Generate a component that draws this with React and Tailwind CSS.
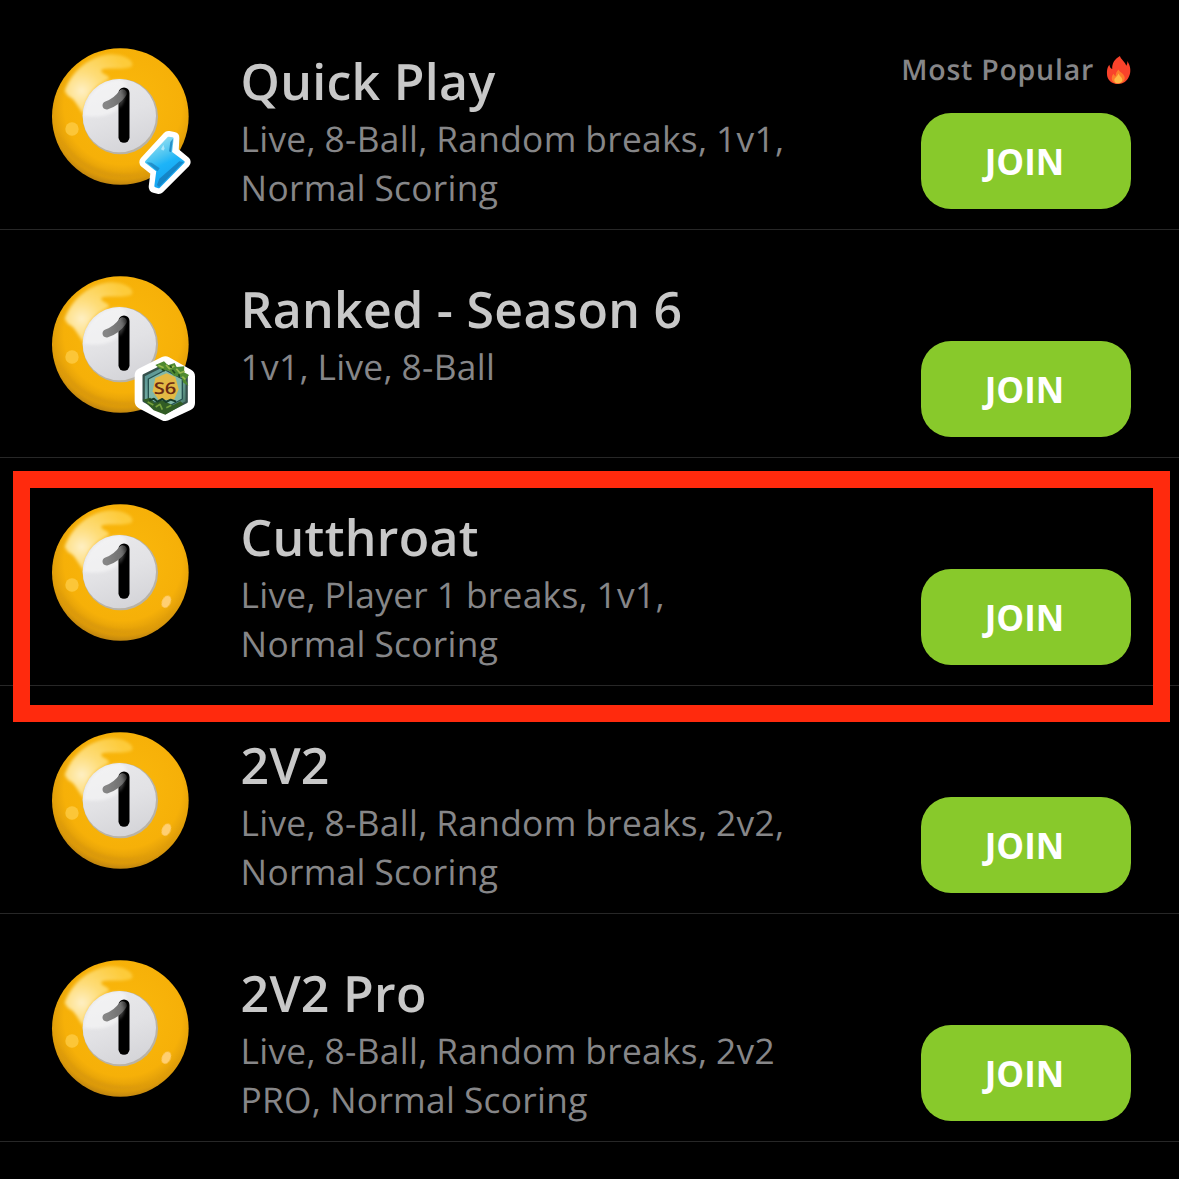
function BallDefs() {
  return (
    <svg className="absolute size-0" aria-hidden="true">
      <defs>
        <radialGradient id="shell" cx="0.52" cy="0.42" r="0.6">
          <stop offset="0" stopColor="#fbb90c" />
          <stop offset="0.72" stopColor="#f6b008" />
          <stop offset="0.9" stopColor="#dc9a0a" />
          <stop offset="1" stopColor="#b47c10" />
        </radialGradient>
        <linearGradient id="disc" x1="0.3" y1="0" x2="0.65" y2="1">
          <stop offset="0" stopColor="#e9e9eb" />
          <stop offset="0.5" stopColor="#e2e2e5" />
          <stop offset="1" stopColor="#d4d4d8" />
        </linearGradient>
        <linearGradient id="flag" gradientUnits="userSpaceOnUse" x1="200" y1="205" x2="268" y2="200">
          <stop offset="0" stopColor="#858585" />
          <stop offset="0.65" stopColor="#707070" />
          <stop offset="1" stopColor="#101010" />
        </linearGradient>
        <radialGradient id="glare" gradientUnits="userSpaceOnUse" cx="125" cy="165" r="150">
          <stop offset="0" stopColor="#fff3cf" stopOpacity="0.95" />
          <stop offset="0.4" stopColor="#ffe48c" stopOpacity="0.85" />
          <stop offset="1" stopColor="#ffd550" stopOpacity="0.7" />
        </radialGradient>
        <linearGradient id="bolt" gradientUnits="userSpaceOnUse" x1="345" y1="320" x2="395" y2="425">
          <stop offset="0" stopColor="#8adcf2" />
          <stop offset="0.4" stopColor="#45c2f2" />
          <stop offset="0.6" stopColor="#1db4f8" />
          <stop offset="1" stopColor="#16a6f2" />
        </linearGradient>
        <linearGradient id="hex" x1="0" y1="0" x2="1" y2="1">
          <stop offset="0" stopColor="#4f8a8c" />
          <stop offset="0.5" stopColor="#78b2a6" />
          <stop offset="1" stopColor="#3c6c5c" />
        </linearGradient>
        <filter id="soft" filterUnits="userSpaceOnUse" x="0" y="0" width="510" height="510">
          <feGaussianBlur stdDeviation="4" />
        </filter>
        <filter id="faint" filterUnits="userSpaceOnUse" x="0" y="0" width="510" height="510">
          <feGaussianBlur stdDeviation="1.6" />
        </filter>
      </defs>
    </svg>
  );
}

function BoltBadge() {
  return (
    <g strokeLinejoin="round">
      <path d="M385 303 L316 378 L350 405 L344 453 L356 456 L434 378 L398 348 L400 306 Z" fill="#fff" stroke="#fff" strokeWidth="36" />
      <path d="M386 306 L319 378 L353 404 L347 450 L356 453 L430 378 L392 350 L397 308 Z" fill="url(#bolt)" stroke="url(#bolt)" strokeWidth="8" />
      <path d="M399 308 L393 349 L387 346 L391 318 Z M431 378 L357 453 L351 447 L358 428 L418 376 Z" fill="#1479b8" opacity="0.75" />
      <path d="M319 379 L335 380 L359 397 L353 406 Z" fill="#1a82be" opacity="0.75" />
      <path d="M363 340 l7 -14 l4 12 l-4 6 Z" fill="#d8f8ff" opacity="0.6" />
    </g>
  );
}

function SeasonBadge() {
  return (
    <g strokeLinejoin="round">
      <path d="M376 300 L442 337 L442 417 L376 448 L307 412 L307 334 Z" fill="#fff" stroke="#fff" strokeWidth="46" />
      <path d="M376 302 L440 336 L440 414 L376 447 L311 411 L311 334 Z" fill="url(#hex)" stroke="#35514c" strokeWidth="7" />
      <path d="M376 318 L427 345 L427 405 L376 432 L325 405 L325 345 Z" fill="#81b8a8" stroke="#24504f" strokeWidth="4" />
      <path d="M346 342 L380 328 L406 339 L416 376 L402 407 L356 408 L338 382 Z" fill="#e3b944" />
      <path d="M346 303 L372 292 L384 304 L404 297 L410 309 L433 307 L432 325 L447 333 L437 347 L445 365 L430 356 L424 338 L402 336 L388 320 L364 318 Z" fill="#4f8a31" />
      <path d="M355 304 l16 7 M378 302 l10 12 l15 -8 M409 314 l11 13 l14 -5 M427 338 l9 8" stroke="#98b94e" strokeWidth="5" fill="none" />
      <path d="M366 316 l8 5 M397 318 l8 10 M416 331 l3 9 M391 305 l3 7" stroke="#1e4a1b" strokeWidth="5" fill="none" />
      <path d="M308 407 L331 401 L343 417 L366 409 L399 424 L421 412 L431 420 L376 452 L341 439 Z" fill="#315c24" />
      <path d="M323 414 l17 9 M347 429 l13 -8 l7 16 M379 431 l15 -7" stroke="#75a13c" strokeWidth="5" fill="none" />
      <path d="M328 409 l14 -5 l10 9 l15 -8 l11 9 l14 -7 l16 6" stroke="#173d2a" strokeWidth="6" fill="none" />
      <text x="375" y="391" textAnchor="middle" fontSize="49" fontWeight="600" fill="#6b2a12" className="font-['Open_Sans',sans-serif]" textLength="68" lengthAdjust="spacingAndGlyphs">S6</text>
    </g>
  );
}

function Ball({ badge }) {
  return (
    <svg viewBox="0 0 510 510" className="mt-[34px] ml-[40px] size-[170px] shrink-0">
      <circle cx="241" cy="241.500" r="205" fill="url(#shell)" />
      <path d="M74 165 C95 105 150 58 215 55 C256 56 284 76 276 90 C262 104 200 92 185 101 C178 113 205 113 208 128 C180 145 137 165 131 235 C113 215 108 190 84 180 Z" fill="url(#glare)" filter="url(#soft)" />
      <path d="M52 290 A205 205 0 0 0 430 305 C390 400 300 425 220 410 C130 395 85 340 52 290 Z" fill="#c98a10" opacity="0.28" filter="url(#soft)" />
      <circle cx="241" cy="242" r="113" fill="#b9b3a6" filter="url(#faint)" />
      <circle cx="238" cy="239" r="110" fill="url(#disc)" filter="url(#faint)" />
      <path d="M131 240 C132 180 180 131 238 131 C264 131 264 165 250 195 C235 232 195 248 131 240 Z" fill="#fff" opacity="0.45" filter="url(#soft)" />
      <path d="M252 171 V304" fill="none" stroke="#030303" strokeWidth="33" strokeLinecap="round" filter="url(#faint)" />
      <path d="M200 208 Q230 198 248 172" fill="none" stroke="url(#flag)" strokeWidth="25" strokeLinecap="round" filter="url(#faint)" />
      <path d="M238 178 L252 172 Q258 195 237 217 Z" fill="#777" opacity="0.55" filter="url(#soft)" />
      <circle cx="96" cy="279" r="20" fill="#ffd04e" opacity="0.7" filter="url(#faint)" />
      {!badge && <ellipse cx="379" cy="329" rx="13" ry="19" transform="rotate(25 379 329)" fill="#ffcf72" filter="url(#faint)" />}
      {badge === 'bolt' && <BoltBadge />}
      {badge === 'season' && <SeasonBadge />}
    </svg>
  );
}

function Flame() {
  return (
    <svg viewBox="0 0 26 30" className="h-[29px] w-[25px]">
      <path d="M14.500 0 C15 3 20 6 21 10 C22 8.500 22.500 7 22 5 C26 10 26 17 24 21 C22 26 18 29 12.500 29 C6 29 1 25 1 18 C1 13 2 11 3.500 9 C4 12 5 13 6.500 13.500 C6 8 9 3 14.500 0 Z" fill="#f9432b" />
      <path d="M13 14 C14 17 19 18 19.500 22.500 C19.500 26 17 28.500 12.500 28.500 C8 28.500 6 26 6 23 C6 21 7 19.500 8 18.500 C8.500 20 9 20.500 10 21 C10 18 11 16 13 14 Z" fill="#fd7c2a" />
      <path d="M13 18 C14 21 17 22 17 25 C16.500 27.500 15 28.300 12.500 28.300 C9.500 28.300 8.500 26.500 8.700 24 C9 22.500 12 21 13 18 Z" fill="#ffb845" />
    </svg>
  );
}

const modes = [
  { title: 'Quick Play', lines: ['Live, 8-Ball, Random breaks, 1v1,', 'Normal Scoring'], badge: 'bolt', popular: true },
  { title: 'Ranked - Season 6', lines: ['1v1, Live, 8-Ball'], badge: 'season' },
  { title: 'Cutthroat', lines: ['Live, Player 1 breaks, 1v1,', 'Normal Scoring'], highlighted: true },
  { title: '2V2', lines: ['Live, 8-Ball, Random breaks, 2v2,', 'Normal Scoring'] },
  { title: '2V2 Pro', lines: ['Live, 8-Ball, Random breaks, 2v2', 'PRO, Normal Scoring'] },
];

function ModeRow({ mode }) {
  return (
    <li className="relative flex h-[228px] border-b border-[#272727]">
      <Ball badge={mode.badge} />
      <div className="ml-[30.500px] flex-1 pt-[49px] whitespace-nowrap">
        <h2 className="text-[50px] leading-[60px] font-semibold tracking-[0.3px] text-[#c8c8c8]">{mode.title}</h2>
        <div className="mt-[4px] text-[35.300px] leading-[49px] tracking-[0.3px] [word-spacing:-0.8px] text-[#868688]">
          {mode.lines.map((line) => (
            <p key={line}>{line}</p>
          ))}
        </div>
      </div>
      <div className="mr-[48px] flex flex-col items-end justify-end pb-[20px]">
        {mode.popular && (
          <div className="mb-[23px] flex items-center gap-[12px] whitespace-nowrap">
            <span className="text-[28.500px] leading-[40px] font-semibold tracking-[0.75px] text-[#868688]">Most Popular</span>
            <Flame />
          </div>
        )}
        <button className="h-[96px] w-[210px] rounded-[30px] bg-[#88c92b] pt-[2px] pr-[3px] text-[35px] leading-[48px] font-bold text-white">
          JOIN
        </button>
      </div>
      {mode.highlighted && (
        <div className="absolute top-[13px] left-[13px] h-[251px] w-[1157px] border-[17px] border-[#ff2a0d]" />
      )}
    </li>
  );
}

export default function App() {
  return (
    <main className="h-[1179px] w-[1179px] overflow-hidden bg-black pt-[2px] font-['Open_Sans',sans-serif] [text-rendering:geometricPrecision]">
      <BallDefs />
      <ul>
        {modes.map((mode) => (
          <ModeRow key={mode.title} mode={mode} />
        ))}
      </ul>
    </main>
  );
}
